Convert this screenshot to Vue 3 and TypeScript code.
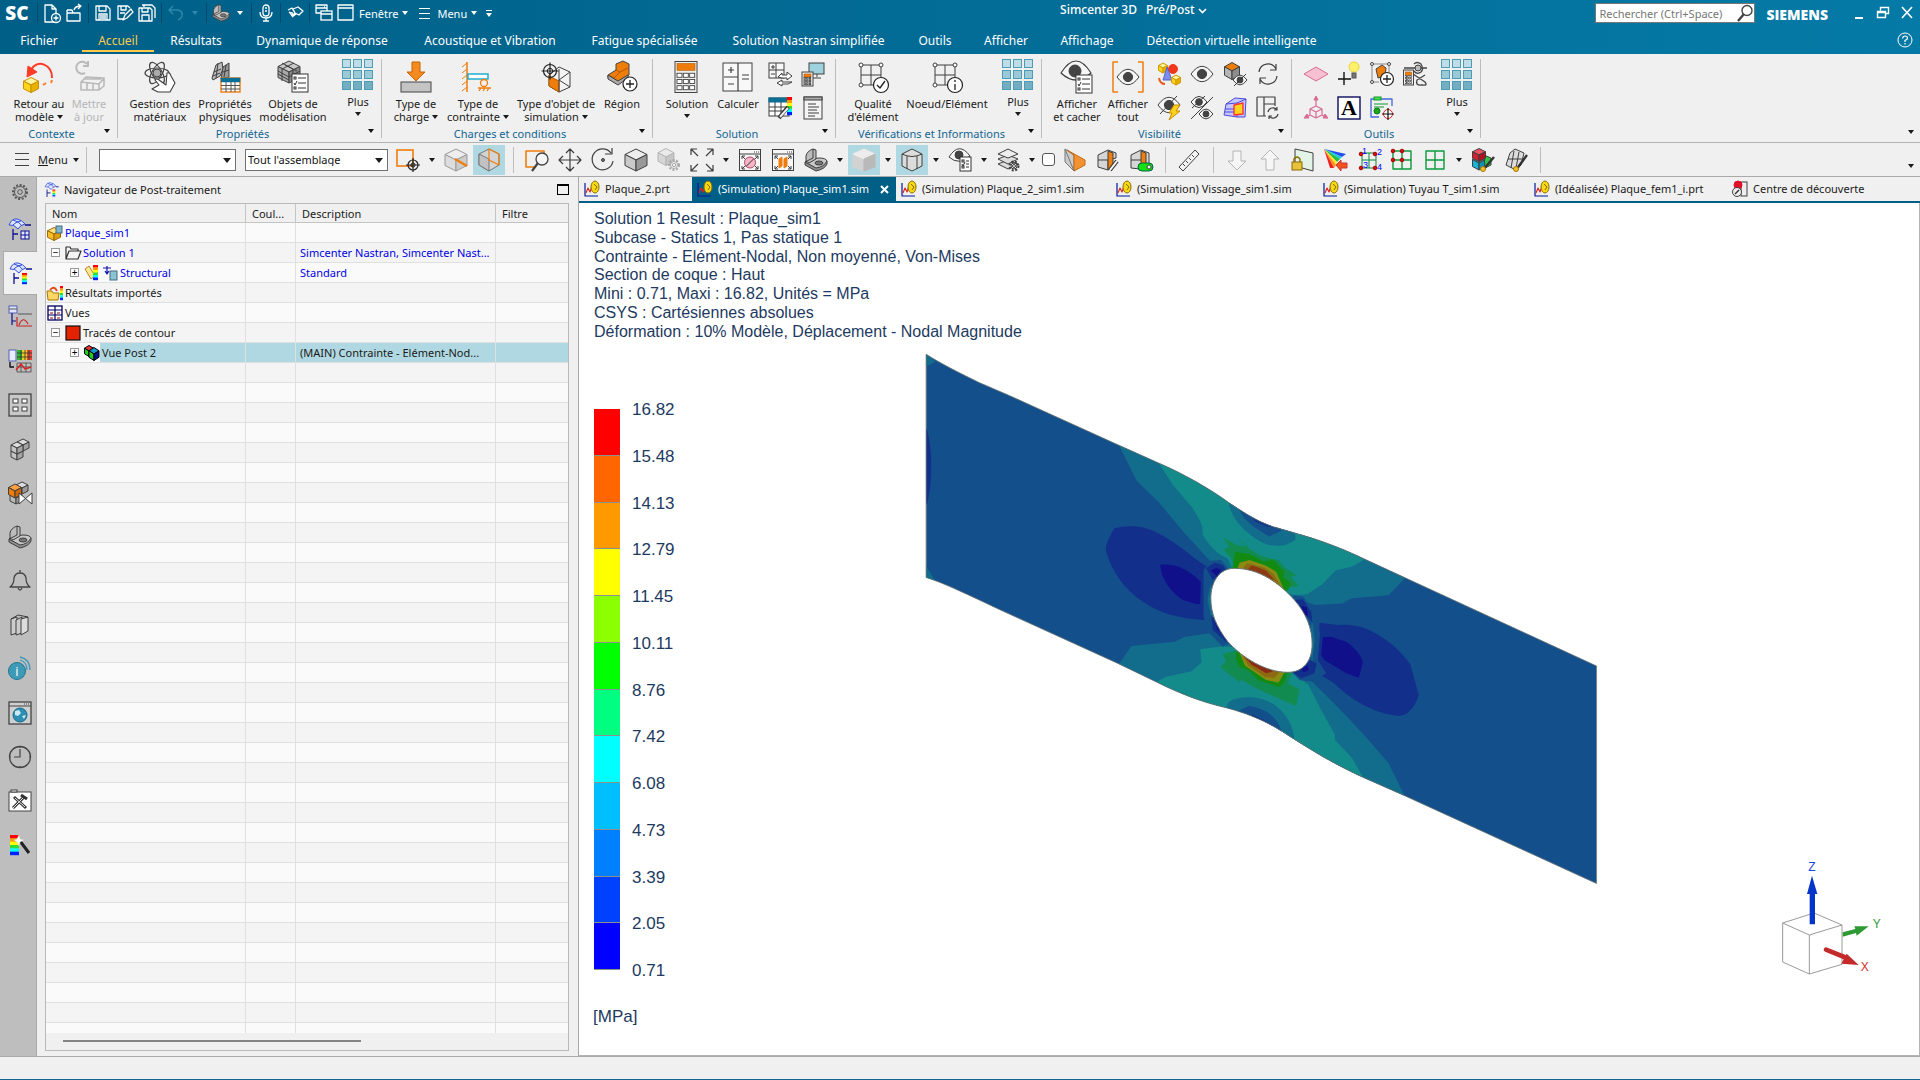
<script setup lang="ts">
import { h } from 'vue'

const D = '#3f3f3f'
const O = '#ef7d0c'
const poly = (pts: string, fill: string, stroke = D, w = 1) =>
  `<polygon points="${pts}" fill="${fill}" stroke="${stroke}" stroke-width="${w}" stroke-linejoin="round"/>`
const line = (d: string, stroke = D, w = 1, fill = 'none') =>
  `<path d="${d}" fill="${fill}" stroke="${stroke}" stroke-width="${w}" stroke-linejoin="round"/>`
const rect = (x: number, y: number, w: number, ht: number, fill: string, stroke = D, sw = 1) =>
  `<rect x="${x}" y="${y}" width="${w}" height="${ht}" fill="${fill}" stroke="${stroke}" stroke-width="${sw}"/>`
const circ = (x: number, y: number, r: number, fill: string, stroke = D, sw = 1) =>
  `<circle cx="${x}" cy="${y}" r="${r}" fill="${fill}" stroke="${stroke}" stroke-width="${sw}"/>`
const cube = (x: number, y: number, w: number, ht: number, t: string, l: string, r: string, s = D) =>
  poly(`${x},${y - ht / 2} ${x + w / 2},${y - ht / 4} ${x},${y} ${x - w / 2},${y - ht / 4}`, t, s) +
  poly(`${x - w / 2},${y - ht / 4} ${x},${y} ${x},${y + ht / 2} ${x - w / 2},${y + ht / 4}`, l, s) +
  poly(`${x + w / 2},${y - ht / 4} ${x},${y} ${x},${y + ht / 2} ${x + w / 2},${y + ht / 4}`, r, s)
const eye = (x: number, y: number, r: number) =>
  line(`M${x - r},${y} Q${x},${y - r * 1.4} ${x + r},${y} Q${x},${y + r * 1.4} ${x - r},${y}Z`, D, 1, '#f6f6f6') +
  circ(x, y, r * 0.42, '#444')
const gear = (x: number, y: number, r: number, c = D, fill = '#f4f4f4') =>
  `<circle cx="${x}" cy="${y}" r="${r}" fill="none" stroke="${c}" stroke-width="2" stroke-dasharray="2 1.6"/>` +
  circ(x, y, r - 1.5, fill, c) + circ(x, y, r / 3, fill, c)
const target = (x: number, y: number, r: number, c = '#222') =>
  circ(x, y, r, 'none', c, 1.2) + circ(x, y, r / 2.4, 'none', c) +
  line(`M${x - r - 2},${y}h${2 * r + 4}M${x},${y - r - 2}v${2 * r + 4}`, c, 1.2)
const badge = (x: number, y: number, r: number, inner: string) => circ(x, y, r, '#fff', '#222', 1.2) + line(inner, '#222', 1.3)
const list = (x: number, y: number, w: number, ht: number) =>
  rect(x, y, w, ht, '#fff', '#333') +
  line(`M${x + 6},${y + 4}h${w - 8}M${x + 6},${y + ht / 2}h${w - 8}M${x + 6},${y + ht - 4}h${w - 8}`, '#333') +
  rect(x + 2, y + 3, 2, 2, '#fff', '#333') + line(`M${x + 2},${y + ht / 2}l1,2l2,-4`, '#333') + rect(x + 2, y + ht - 5, 2, 2, '#fff', '#333')
const calc = (x: number, y: number, w: number, ht: number) => {
  let s = rect(x, y, w, ht, '#ececec', '#444') + rect(x + 2, y + 2, w - 4, ht * 0.22, O, '#b55a00', 0.6)
  for (let i = 0; i < 3; i++) for (let j = 0; j < 3; j++)
    s += rect(x + 2 + (i * (w - 3)) / 3, y + ht * 0.38 + j * ht * 0.2, (w - 7) / 3, ht * 0.13, '#fff', '#444', 0.9)
  return s
}
const rainbow = (x: number, y: number, w: number, ht: number) =>
  ['#f00', '#f90', '#ff0', '#3d3', '#0ff', '#02f'].map((c, i) =>
    `<rect x="${x}" y="${y + (i * ht) / 6}" width="${w}" height="${ht / 6 + 0.2}" fill="${c}"/>`).join('')
const plus9 = [0, 1, 2].map(r => [0, 1, 2].map(c =>
  rect(0.5 + c * 11, 0.5 + r * 11, 8, 8, ['#bfdde6', '#9cc9d6', '#74aec2'][r], '#4c9cb8')).join('')).join('')
const surf = (x: number, y: number, k: string) =>
  line(`M${x},${y + 7}Q${x + 3},${y} ${x + 8},${y + 1}Q${x + 13},${y + 2} ${x + 16},${y + 6}Q${x + 11},${y + 7} ${x + 9},${y + 11}Q${x + 5},${y + 6} ${x},${y + 7}ZM${x + 4},${y + 2}Q${x + 10},${y + 3} ${x + 13},${y + 8}M${x + 12},${y + 3}Q${x + 6},${y + 4} ${x + 4},${y + 7}`, k, 1, '#dfe6ff')
const bracket = line('M1,14V17L12,23Q21,21 23,16V13L12,19Z', D, 1, '#8f8f8f') +
  line('M1,14L7,11L15,10Q22,10 23,13Q20,19 12,20Z', D, 1, '#c9c9c9') +
  line('M2,13V8Q3,3 9,1L12,2V11L5,15Z', D, 1, '#bcbcbc') + line('M9,1V10L1,14') +
  '<ellipse cx="15" cy="15" rx="4" ry="2" fill="#777" stroke="#3f3f3f"/>'
const pin = line('M1,2V15H14', '#001a9a', 1.2) + line('M2,12l2,-5l2,4l2,-6l2,5', '#d22', 1.1) +
  '<ellipse cx="11" cy="6" rx="4" ry="6" fill="#f6d912" stroke="#8a6b00"/><path d="M10,3l3,3l-2,3" stroke="#8a6b00" fill="none"/>'
const win = rect(1.5, 1.5, 21, 21, '#f7f7f7') + line('M1,6H23M16,4h1M18,4h1M20,4h1') +
  line('M4,11V8h3M20,11V8h-3M4,18v3h3M20,18v3h-3M4,8l3,3M20,8l-3,3M4,21l3,-3M20,21l-3,-3', D, 1)
const grid4 = (c: string) => line('M3,3H21V21H3ZM12,3V21M3,12H21', c, 1.4)
const dot = (x: number, y: number) => circ(x, y, 1.8, '#d8120c', '#a00')
const W = '#fff'

const icons: Record<string, string> = {
  plus9,
  retour: cube(8, 24, 15, 15, '#fff3a0', '#ffd51c', '#eab000', '#c99000') + line('M29,17C30,4 14,-3 8,9', '#ff3b26', 2) +
    poly('4,16 5,5 14,11', '#ff3b26', '#ff3b26') + line('M20,24l3,-2M28,22l1,-3', '#ff7a2a', 2),
  maj: line('M12,12A6,6 0 1 1 14,3M15,0v5h-5', '#b9b9b9', 2) + line('M8,21L13,16L31,17L26,23ZM8,21v8h18v-6M31,17v8l-5,4M14,21v8M20,22v7M11,18h17', '#b9b9b9', 1.6),
  gestion: '<g fill="none" stroke="#444" stroke-width="1.2"><ellipse cx="13" cy="12" rx="12" ry="5"/><ellipse cx="13" cy="12" rx="12" ry="5" transform="rotate(60 13 12)"/><ellipse cx="13" cy="12" rx="12" ry="5" transform="rotate(120 13 12)"/></g>' +
    circ(13, 12, 4, '#aaa') + line('M8,28L15,24L11,19Q12,17 15,19L22,24L23,12Q26,11 27,15L31,22L26,31H14Z', D, 1.1, '#fff'),
  props: poly('3,17 7,4 13,1 14,8 11,15 4,19', '#bbb') + poly('12,18 14,6 20,2 20,16', '#999') + line('M5,11L12,8M4,15L11,12M9,2L7,17M14,11L20,9M17,4L15,16') +
    rect(12, 17, 19, 14, '#fff', O, 1.4) + rect(12, 17, 19, 4, '#0a6f96', '#0a6f96', 0.5) + line('M12,24.5H31M12,28H31M17,21V31M22,21V31M26,21V31', '#555'),
  objets: cube(12, 11, 22, 22, '#c9c9c9', '#aaa', '#888') + line('M5,2L16,8V20M17,2L5,8V20M8,4L20,10M1,10L12,16L23,10M1,13L12,19') + list(15, 13, 16, 18),
  charge: poly('12,1 20,1 20,11 25,11 16,20 7,11 12,11', '#f58a1f', '#c76200') + rect(1, 21, 30, 10, '#c4c4c4', '#444'),
  contrainte: line('M5,1V31', O, 1.5) + line('M0,6L5,2M0,12L5,8M0,18L5,14M0,24L5,20M0,30L5,26', O) + rect(6, 13, 20, 5, W, '#12a8cc', 1.4) +
    circ(22, 22, 3.5, 'none', O, 1.3) + line('M16,27H29M17,30l2,-3M21,30l2,-3M25,30l2,-3', O, 1.3),
  typeobj: poly('19,6 30,11 30,26 19,31 9,25 9,14', '#f4f4f4') + poly('9,15 19,20 19,31 9,25', O, '#b65c00') + line('M19,19L30,11M19,19L30,26M19,8V31') + target(10, 10, 6.5),
  region: poly('2,14 10,9 10,3 17,0 23,3 23,14 13,21 2,17', O, '#444') + line('M10,9L14,11L22,7M2,14L8,17L14,11', '#b55a00') + poly('2,14 2,18 12,24 22,17 22,14 12,20', '#aaa') +
    badge(24, 23, 7, 'M24,19v8M20,23h8'),
  solution: calc(4, 0.5, 22, 31),
  calculer: rect(1, 2, 29, 28, '#f8f8f8') + line('M16,2V30M2,16H16M6,9h6M9,6v6M6,23h6M20,14h7M20,18h7', D, 1.2),
  s1: rect(1, 1, 15, 15, '#f8f8f8') + line('M8,1V16M1,8H16M3,5h4M5,3v4M3,12h4') + poly('10,15 14,11 14,13 19,13 19,10 24,14 19,18 19,16 14,16', W) + poly('24,20 14,20 14,18 9,21 14,24 14,22 20,22', W),
  s2: rect(8, 1, 15, 11, '#9ed2de') + line('M16,12v3M12,16h8') + calc(1, 10, 11, 14),
  s3: rect(1, 2, 20, 18, '#fff') + rect(1, 2, 20, 4, '#0a6f96', '#0a6f96') + line('M1,11H21M1,15H21M7,6V20M13,6V20') + rainbow(19, 1, 5, 18) + line('M11,22L20,11', '#333', 4) + line('M12,21L20,12', '#eee', 2),
  s4: rect(3, 1, 18, 22, '#f4f4f4') + rect(3, 1, 18, 3, '#aaa') + line('M7,8h8M7,11h11M7,14h9M7,17h11M7,20h7'),
  qualite: line('M4,4H24V24H4ZM14,4V24M4,14H24') + circ(4, 4, 2, W) + circ(24, 4, 2, W) + circ(4, 24, 2, W) + badge(24, 24, 7.5, 'M20,24l3,3l5,-7'),
  noeud: line('M4,4H24V24H4ZM14,4V24M4,14H24') + circ(4, 4, 2, W) + circ(24, 4, 2, W) + circ(4, 24, 2, W) + badge(24, 24, 7.5, 'M24,19v2M24,23v6'),
  affcacher: line('M0,12Q15,-12 30,12Q15,26 0,12Z', D, 1.2, '#f6f6f6') + circ(14, 10, 6, '#444') + list(15, 14, 16, 18),
  afftout: line('M6,1H1V31H6M26,1H31V31H26', O, 1.5) + eye(16, 16, 11),
  v1: cube(6, 6, 9, 10, '#fff3a0', '#ffd51c', '#eab000', '#d09a00') + circ(16, 7, 4.5, '#f2371c', '#f2371c') + poly('10,5 15,18 6,18', '#7c8cf0', '#5566cc') + cube(19, 18, 9, 10, '#fff3a0', '#ffd51c', '#eab000', '#d09a00') + line('M2,16q1,6 6,6', '#f05a1c', 2),
  v2: eye(12, 12, 11),
  v3: cube(9, 9, 15, 17, O, '#b5b5b5', '#8d8d8d') + eye(17, 18, 7) + line('M11,24L23,12'),
  v4: line('M3,10A9,9 0 0 1 20,7M20,2v6h-6M21,14A9,9 0 0 1 4,17M4,22v-6h6', D, 1.2),
  v5: eye(12, 9, 11) + line('M3,18L20,0') + poly('17,9 23,9 19,15 23,15 12,24 15,17 12,17', '#ffd21c', '#c78c00'),
  v6: eye(9, 6, 8) + eye(16, 18, 7) + line('M1,23L23,1M2,12L15,0'),
  v7: poly('3,8 12,2 23,3 22,21 14,21 1,19', '#c6c6ff', '#4b4bd8') + line('M3,8L14,7L23,3M14,7V21M2,13H14M2,16H14', '#4b4bd8') + poly('11,9 20,7 20,18 11,19', '#ffd21c', '#f33', 1.4),
  v8: line('M1,1H19V10M1,1V20H10M8,1V20M8,8H19', D, 1.2) + line('M12,16A5,5 0 0 1 21,14M22,18A5,5 0 0 1 13,20M21,11v3h-3M13,23v-3h3', D, 1.2),
  o1: poly('12,5 24,12 12,19 0,12', '#f7c0d2', '#d86a93'),
  o2: line('M7,10V23M1,17H14', '#111', 1.4) + circ(17, 5, 5, '#fdf06a', '#e8d530') + rect(15, 11, 4, 5, '#777', '#555'),
  o3: line('M2,2H19M2,2V20M19,2V10M2,20H9', '#888') + circ(2, 2, 1.5, W) + circ(19, 2, 1.5, W) + circ(2, 20, 1.5, W) + poly('6,7 12,3 16,6 15,14 8,16', O, '#444') + badge(17, 17, 6.5, 'M17,13v8M13,17h8'),
  o4: line('M1,6H24M11,2Q14,-1 18,2Q21,7 18,10Q14,13 11,9', '#444', 1.3) + line('M10,12L22,20Q25,24 19,23Q12,24 14,18L22,13', '#444', 1.3) + circ(15, 6, 3, '#bbb') + calc(0.5, 8, 10, 15),
  o5: line('M12,10L18,13V19L12,22L6,19V13ZM12,16V22M12,16L6,13M12,16L18,13M12,10V1M18,19l5,3M6,19l-5,3', '#d86a93', 1.2) + poly('12,0 14,4 10,4', '#d86a93', '#d86a93') + poly('0,22 5,22 3,18', '#d86a93', '#d86a93') + poly('24,22 19,22 21,18', '#d86a93', '#d86a93'),
  o6: rect(1, 1, 22, 22, W, '#0c0c5c', 1.4) + '<text x="12" y="19" text-anchor="middle" font-family="Liberation Serif, serif" font-weight="700" font-size="22">A</text>',
  o7: line('M9,21H1V3H22V10', '#4468d8', 1.3) + rect(4, 1, 7, 3, '#4ddc4d', '#0a9a2a') + line('M4,8h14M4,11h10', '#0a9a2a') + circ(7, 15, 3, '#1aa81a', '#0a7a1a') + circ(18, 18, 4.5, W, '#d22') + line('M18,12V24M12,18H24', '#111', 1.2),
  selbox: rect(1, 2, 16, 16, 'none', O, 1.6) + target(17, 17, 5),
  cubeedge: cube(12, 12, 22, 22, '#eee', '#ddd', '#ccc', '#999') + line('M11,11L23,18', O, 2.4),
  cubewire: poly('12,1 22,6 22,17 12,23 2,17 2,6', '#d4d4d4', '#777') + poly('2,6 12,11 12,23 2,17', '#c2c2c2', '#777') + line('M12,1L22,6V17L12,12Z', O, 1.2),
  zoomwin: line('M9,19H1V3H19V6', O, 1.6) + circ(17, 11, 6, '#f6f6f6', '#444', 1.3) + line('M13,15L7,23', '#444', 2.2),
  pan: line('M12,1V23M1,12H23M8,5l4,-4l4,4M8,19l4,4l4,-4M5,8l-4,4l4,4M19,8l4,4l-4,4', D, 1.2),
  rotate: line('M20,5A10.500,10.500 0 1 0 22,13M21,0V6H14', D, 1.2) + circ(12, 12, 1.5, '#777'),
  cubegray: cube(12, 12, 22, 22, '#eee', '#c9c9c9', '#999'),
  cubegear: cube(9, 9, 16, 17, '#eaeaea', '#d6d6d6', '#c6c6c6', '#b5b5b5') + gear(17, 17, 5, '#a8a8a8'),
  fit: line('M1,7V1H7M1,1L8,8M23,7V1H17M23,1L16,8M1,17V23H7M1,23L8,16M23,17V23H17M23,23L16,16', D, 1.2),
  win1: win + circ(12, 14.5, 5.5, '#f4b5c8', '#b04a6a') + line('M8,18.500L16,10.500', '#333'),
  win2: win + poly('8,11 11,9 11,18 8,20', O, O) + poly('13,11 16,9 16,18 13,20', O, O),
  bracket,
  shaded: poly('1,6 12,1 23,6 23,19 12,23 1,19', '#d2d2d2', '#d2d2d2') + poly('1,6 12,1 23,6 12,11', '#ececec', '#ececec') + poly('12,11 23,6 23,19 12,23', '#b9b9b9', '#b9b9b9'),
  shadededge: poly('2,6 12,1 22,6 22,18 12,23 2,18', '#dcdcdc') + line('M2,6Q12,11 22,6M7,8V21M17,8V21'),
  eyelist: line('M1,9Q11,-7 22,8Q11,18 1,9Z', D, 1, '#f6f6f6') + circ(11, 7, 4, '#444') + list(12, 9, 11, 14),
  layers: poly('12,12 22,16 12,21 2,16', '#ddd') + poly('12,7 22,11 12,16 2,11', '#ddd') + poly('12,1 22,6 12,10 2,6', '#eee') + gear(18, 18, 4.5),
  clip1: poly('2,1 11,7 11,23 2,14', '#ccc', '#777') + poly('4,2 22,12 22,17 11,23 11,7', '#f39233', '#c46a10') + line('M2,1L11,23', '#777'),
  clip2: poly('2,7 12,2 20,5 20,10 12,12 12,22 2,19', '#d6d6d6') + poly('12,3 17,5 17,20 12,22', O) + line('M2,12H12') + line('M14,22L21,13', '#333', 4) + line('M14,22L21,13', W, 2),
  clip3: poly('2,7 12,2 20,5 20,22 2,20', '#d6d6d6') + poly('12,3 17,5 17,20 12,22', O) + line('M2,12H12') + '<rect x="9" y="15" width="15" height="8" rx="4" fill="#12e012" stroke="#064"/>' + circ(20, 19, 2, W),
  ruler: poly('2,19 18,2 22,6 6,23', '#f4f4f4') + line('M6,16l2,2M9,13l2,2M12,10l2,2M15,7l2,2'),
  down: poly('8,3 16,3 16,13 21,13 12,22 3,13 8,13', '#f6f6f6', '#b4b4b4'),
  up: poly('8,22 16,22 16,11 21,11 12,2 3,11 8,11', '#f6f6f6', '#b4b4b4'),
  lock: poly('4,1 22,5 22,23 4,18', '#e3f3e6') + rect(1, 14, 10, 8, '#e8c23a', '#8a6a00') + line('M3,14v-3q3,-4 6,0v3', '#8a6a00', 1.4),
  contour: '<path d="M0,1L22,6L18,9Z" fill="#2050f0"/><path d="M0,1L18,9L16,11Z" fill="#20c8e8"/><path d="M0,1L16,11L13,14Z" fill="#20c040"/><path d="M0,1L13,14L12,17Z" fill="#ffe820"/><path d="M0,1L12,17L10,20Z" fill="#ff9020"/><path d="M0,1L10,20L6,20Z" fill="#f02020"/>' + poly('12,17 17,12 17,15 23,15 23,20 17,20 17,23', '#f2531c', '#c33'),
  nums: line('M5,5H19V20H5ZM12,5V20M5,12H19', '#0a8a3a') + dot(4, 6) + dot(18, 6) + dot(4, 20) + dot(18, 20) +
    '<g font-family="Liberation Sans, sans-serif" font-size="9" fill="#00f"><text x="5" y="6">1</text><text x="20" y="7">2</text><text x="6" y="20">3</text><text x="20" y="22">4</text></g>',
  griddots: grid4('#0a9a3c') + dot(3, 3) + dot(12, 3) + dot(3, 12) + dot(12, 12),
  grid: grid4('#0a9a3c'),
  cubes: cube(8, 15, 13, 14, '#5ce', '#19b5d8', '#0a90b0') + poly('13,7 20,10 20,17 14,20', '#2bc44a') + cube(8, 7, 13, 13, '#f05060', '#d02030', '#b01020') + line('M12,22L23,9', '#333', 2.4) + circ(12, 21, 2.5, '#f0c030', '#a70'),
  mesh: poly('6,5 11,1 20,5 17,17 12,22 2,17', '#ddd') + line('M4,11L18,11M10,3L7,20M15,4L12,20') + line('M12,22L23,7', '#333', 2.4) + circ(12, 21, 2.5, '#f0c030', '#a70'),
  gear: gear(12, 12, 7, '#555', '#bebebe'),
  r1: surf(1, 1, '#3450d8') + line('M5,12V23M5,17H10M17,8H23', '#101090', 1.3) + rect(13, 14, 8, 8, '#dfe6ff', '#101090') + line('M17,14V22M13,18H21', '#101090'),
  r2: surf(1, 1, '#3450d8') + line('M5,12V23M5,17H10M17,8H23', '#101090', 1.3) + rainbow(13, 12, 5, 11),
  r3: rect(1, 1, 8, 7, '#dfe6ff', '#5560b0') + line('M1,4H9M10,9H24', '#555') + line('M4,8V20M4,16H8', '#101090', 1.2) + line('M9,12V21H24M11,20Q15,10 20,19', '#c22', 1.2),
  r4: rect(1, 1, 7, 11, '#e8ecff', '#5560b0') + '<path d="M9,1H24V11H9Z" fill="#e8d020"/><path d="M9,1h5v10h-5z" fill="#2db52d"/><path d="M19,1h5v10h-5z" fill="#e43"/>' + line('M9,4H24M9,8H24M13,1V11M17,1V11M21,1V11', '#333', 0.8) + line('M9,14H23V23H9ZM13,14V23M18,14V23M9,18H23', '#444', 0.8) + line('M8,21l5,-6l4,5l6,-2', '#d22', 1.4) + line('M2,13v5h4', '#111', 1.4),
  r5: rect(1, 1, 22, 22, '#c8c8c8', '#444', 1.3) + rect(5, 6, 5, 4, W) + rect(14, 6, 5, 4, W) + rect(5, 14, 5, 4, W) + rect(14, 14, 5, 4, W),
  r6: cube(9, 17, 12, 12, '#ddd', '#c4c4c4', '#a4a4a4') + cube(15, 8, 12, 12, '#ddd', '#c4c4c4', '#a4a4a4') + cube(9, 11, 12, 12, '#ddd', '#c4c4c4', '#a4a4a4'),
  r7: cube(8, 17, 12, 12, '#ddd', '#bbb', '#999') + cube(14, 7, 12, 12, '#ddd', '#bbb', '#999') + cube(7, 10, 13, 14, '#ffa040', O, '#d06400') + poly('11,12 24,23 24,12 11,23', W),
  bell: line('M2,18Q6,15 6,9Q7,4 12,4Q17,4 18,9Q18,15 22,18ZM10,19q2,4 4,0M12,4V1', '#444', 1.3),
  books: poly('3,6 9,4 9,20 3,22', '#ccc') + poly('8,7 14,4 14,20 8,22', '#ccc') + poly('13,6 20,4 20,18 13,22', '#ddd') + line('M3,6L10,2L20,4'),
  info: '<ellipse cx="9" cy="14" rx="8.500" ry="8.500" fill="#3f9ab8" stroke="#1f7896"/><text x="9" y="19" text-anchor="middle" font-family="Open Sans, sans-serif" font-size="13" fill="#fff">i</text>' + line('M12,3Q19,5 19,13M12,0Q22,2 22,13', '#3f9ab8', 1.3),
  web: rect(1, 1, 22, 22, '#d0d0d0', '#444', 1.3) + line('M1,5H23M16,3h1M18,3h1M20,3h1', '#444') + circ(12, 14, 7, '#2d8fb4', '#1a6a8a') + '<path d="M7,10l4,-1l2,3l-3,3l-3,-1zM14,15l4,-1l-2,4z" fill="#cfe8f0"/>',
  clock: circ(12, 12, 10.5, 'none', '#444', 1.3) + line('M12,4V12H6M12,1v2M12,21v2M1,12h2M21,12h2', '#444', 1.2),
  tools: rect(1, 3, 22, 19, W, '#444') + rect(3, 1, 6, 2, W) + line('M5,19L16,8', '#333', 3) + line('M6,8L18,19', '#333', 3) + line('M13,6l6,4', '#333', 3) + line('M5,19L15,9M7,9L17,18', '#eee', 1),
  wand: rainbow(2, 2, 9, 20) + line('M12,8L21,20', '#222', 3) + poly('11,2 12,6 16,7 12,9 11,13 9,9 6,7 9,6', W, '#ccc', 0.5),
  tnew: line('M11,18H2V1H9L13,5V9M9,1V5H13', W, 1.3) + circ(13, 14, 4.5, 'none', W, 1.3) + line('M13,11.500v5M10.500,14h5', W, 1.3),
  topen: line('M2,6V17H15V9H2M2,6H7L8,9M9,6Q10,2 16,2M13,0l3,2l-3,3', W, 1.3),
  tsave: line('M2,2H13L16,5V16H2ZM5,2V7H12V2M5,16V10H13V16M6,12h6M6,14h6', W, 1.3),
  tsaveas: line('M12,2H2V15H7M5,2V6H10V2M12,2l2,2M7,16l2,-5L15,5l2,3L11,14ZM4,9H9', W, 1.3),
  tsaveall: line('M4,1H14L17,4V14M1,4H12L14,6V17H1ZM4,4V8H10V4M4,17V11H11V17M6,1V3', W, 1.3),
  tundo: line('M6,2L2,6L6,10M2,6H11Q16,7 15,12Q14,15 11,16', '#2f86ab', 1.5),
  tmic: '<rect x="6" y="1" width="6" height="11" rx="3" fill="none" stroke="#fff" stroke-width="1.3"/>' + line('M3,8Q3,14 9,14Q15,14 15,8M9,14V17M6,17H12M8,4h2M8,7h2', W, 1.3),
  ttag: line('M2,6L6,4L9,9L6,13M9,9L7,5L12,3L17,7L13,11ZM6,13L10,10', W, 1.3) + poly('3,8 7,9 6,12', '#cfe2ea', W),
  twins: line('M1,1H12V9H1ZM1,4H12', W, 1.3) + rect(6, 7, 11, 9, '#005f87', W, 1.3) + line('M6,10H17M9,3h1', W, 1.3),
  twin: line('M1,1H16V16H1ZM1,4H16', W, 1.3),
  nav: surf(0, 0, '#3450d8') + line('M3,11V22M3,16H8M16,7H20', '#101090', 1.3) + rainbow(11, 11, 4, 10),
  folderY: cube(7, 9, 13, 13, '#ffe07a', '#f8c02c', '#dd9f10', '#9a6a00') + rect(9, 1, 6, 7, '#7ab8c8', '#468'),
  folder: line('M1,14V2H5L6,4H13V6M1,14L4,6H16L13,14Z', '#333', 1.2),
  ruleR: poly('1,4 5,1 11,11 7,14', '#ffe890', '#a60', 0.8) + rainbow(9, 0, 5, 15),
  calcB: line('M1,3h8M5,1v8M3,6l2,3l2,-3', '#1212b0', 1.2) + rect(8, 6, 7, 9, '#8cc3d0', '#468'),
  import: poly('0,6 5,6 6,8 12,8 11,15 1,15', '#ffd765', '#a57800') + line('M3,5Q7,0 10,6', '#e6461c', 1.8) + rainbow(13, 1, 3, 14),
  views: rect(1, 1, 14, 14, W, '#000060', 1.3) + line('M1,5H15M8,1V15M1,10H15', '#000060', 1.2) + line('M3,8h3M10,8h3M3,13h3M10,13h3', '#900', 1.2),
  red: rect(1, 1, 14, 14, '#e32200', '#111', 1.2),
  post: cube(5, 6, 9, 11, '#e33', '#2c2', '#ee2', '#000') + cube(10, 9, 10, 13, '#19c', '#2c2', '#00118a', '#000'),
  center: rect(9, 1, 6, 14, '#eee') + circ(6, 4, 4, '#e3102c', '#e3102c') + circ(5, 11, 4.5, '#eee') + line('M3,13l4,-4', '#333', 1.4),
  pin,
}

const Ico = (p: any) => {
  const b = p.box ?? 24
  return h('svg', { width: p.size ?? b, height: p.size ?? b, viewBox: `0 0 ${b} ${b}`, 'aria-hidden': 'true', innerHTML: icons[p.n], style: { display: 'block', flex: 'none', overflow: 'visible' } })
}

const menuTabs = [
  { t: 'Fichier', w: 78 }, { t: 'Accueil', w: 72, on: true }, { t: 'Résultats', w: 84 }, { t: 'Dynamique de réponse', w: 168 },
  { t: 'Acoustique et Vibration', w: 168 }, { t: 'Fatigue spécialisée', w: 141 }, { t: 'Solution Nastran simplifiée', w: 187 },
  { t: 'Outils', w: 66 }, { t: 'Afficher', w: 76 }, { t: 'Affichage', w: 86 }, { t: 'Détection virtuelle intelligente', w: 203 },
]

interface Big { i: string; a: string; b?: string; w: number; c?: boolean; off?: boolean }
interface Group { name: string; w: number; pad: number; big: Big[]; small?: string[]; cols?: number; plus?: boolean }
const groups: Group[] = [
  { name: 'Contexte', w: 118, pad: 13, big: [{ i: 'retour', a: 'Retour au', b: 'modèle', w: 52, c: true }, { i: 'maj', a: 'Mettre', b: 'à jour', w: 48, off: true }] },
  { name: 'Propriétés', w: 264, pad: 10, plus: true, big: [{ i: 'gestion', a: 'Gestion des', b: 'matériaux', w: 64 }, { i: 'props', a: 'Propriétés', b: 'physiques', w: 66 }, { i: 'objets', a: 'Objets de', b: 'modélisation', w: 70 }] },
  { name: 'Charges et conditions', w: 271, pad: 8, big: [{ i: 'charge', a: 'Type de', b: 'charge', w: 52, c: true }, { i: 'contrainte', a: 'Type de', b: 'contrainte', w: 72, c: true }, { i: 'typeobj', a: "Type d'objet de", b: 'simulation', w: 84, c: true }, { i: 'region', a: 'Région', w: 48 }] },
  { name: 'Solution', w: 183, pad: 8, big: [{ i: 'solution', a: 'Solution', w: 52, c: true }, { i: 'calculer', a: 'Calculer', w: 50 }], small: ['s1', 's2', 's3', 's4'], cols: 2 },
  { name: 'Vérifications et Informations', w: 206, pad: 4, plus: true, big: [{ i: 'qualite', a: 'Qualité', b: "d'élément", w: 66 }, { i: 'noeud', a: 'Noeud/Elément', w: 82 }] },
  { name: 'Visibilité', w: 250, pad: 8, big: [{ i: 'affcacher', a: 'Afficher', b: 'et cacher', w: 54 }, { i: 'afftout', a: 'Afficher', b: 'tout', w: 48 }], small: ['v1', 'v2', 'v3', 'v4', 'v5', 'v6', 'v7', 'v8'], cols: 4 },
  { name: 'Outils', w: 189, pad: 7, big: [], small: ['o1', 'o2', 'o3', 'o4', 'o5', 'o6', 'o7'], cols: 4, plus: true },
]

// '>' is a drop-down caret, '|' a separator, '#' a tick box, '*' marks a pressed button
const tools = ['selbox', '>', 'cubeedge', '*cubewire', '|', 'zoomwin', 'pan', 'rotate', 'cubegray', 'cubegear', 'fit', '>', 'win1', 'win2', 'bracket', '>',
  '*shaded', '>', '*shadededge', '>', 'eyelist', '>', 'layers', '>', '#', 'clip1', 'clip2', 'clip3', '|', 'ruler', '|', 'down', 'up', 'lock', 'contour',
  'nums', 'griddots', 'grid', '>', 'cubes', 'mesh', '|']
const quick = ['|', 'tnew', 'topen', '|', 'tsave', 'tsaveas', 'tsaveall', '|', 'tundo', '<', '|', 'bracket', '>', '|', 'tmic', '|', 'ttag', '|', 'twins', 'twin']
const rail = ['r1', 'r2', 'r3', 'r4', 'r5', 'r6', 'r7', 'bracket', 'bell', 'books', 'info', 'web', 'clock', 'tools', 'wand']

const docs = [
  { t: 'Plaque_2.prt', w: 113 }, { t: '(Simulation) Plaque_sim1.sim', w: 204, on: true }, { t: '(Simulation) Plaque_2_sim1.sim', w: 215 },
  { t: '(Simulation) Vissage_sim1.sim', w: 207 }, { t: '(Simulation) Tuyau T_sim1.sim', w: 211 }, { t: '(Idéalisée) Plaque_fem1_i.prt', w: 198 },
  { t: 'Centre de découverte', w: 190, i: 'center' },
]

interface Row { n?: string; d?: string; ic?: string[]; lv?: number; ex?: string; blue?: boolean; sel?: boolean }
const rows: Row[] = [
  { n: 'Plaque_sim1', ic: ['folderY'], lv: 0, blue: true },
  { n: 'Solution 1', ic: ['folder'], lv: 1, ex: '-', blue: true, d: 'Simcenter Nastran, Simcenter Nast...' },
  { n: 'Structural', ic: ['ruleR', 'calcB'], lv: 2, ex: '+', blue: true, d: 'Standard' },
  { n: 'Résultats importés', ic: ['import'], lv: 0 },
  { n: 'Vues', ic: ['views'], lv: 0 },
  { n: 'Tracés de contour', ic: ['red'], lv: 1, ex: '-' },
  { n: 'Vue Post 2', ic: ['post'], lv: 2, ex: '+', sel: true, d: '(MAIN) Contrainte - Elément-Nod...' },
  ...Array.from({ length: 34 }, () => ({})),
]

const info = ['Solution 1 Result : Plaque_sim1', 'Subcase - Statics 1, Pas statique 1', 'Contrainte - Elément-Nodal, Non moyenné, Von-Mises',
  'Section de coque : Haut', 'Mini : 0.71, Maxi : 16.82, Unités = MPa', 'CSYS : Cartésiennes absolues', 'Déformation : 10% Modèle, Déplacement - Nodal Magnitude']
const bands = ['#ff0000', '#ff6600', '#ff9900', '#ffff00', '#8cff00', '#00ff00', '#00ff80', '#00ffff', '#00bfff', '#0080ff', '#0040ff', '#0000ff']
const values = ['16.82', '15.48', '14.13', '12.79', '11.45', '10.11', '8.76', '7.42', '6.08', '4.73', '3.39', '2.05', '0.71']
const plate = 'M58,40C90,66 130,92 173,119L240,156L300,191L478,295L565,345C620,375 680,420 720,458C760,492 790,515 822,526C880,548 930,563 1010,612L1518,913V1522L1100,1276L1010,1225C950,1190 905,1155 850,1110C810,1075 770,1050 712,1030C660,1015 610,990 560,958L478,907L230,762C150,714 100,682 58,665Z'
</script>

<template>
  <div class="app">
    <header class="head">
      <div class="titlebar">
        <span class="logo">SC</span>
        <template v-for="(q, k) in quick" :key="k">
          <i v-if="q === '|'" class="tsep"></i>
          <button v-else-if="q === '>' || q === '<'" class="tcaret" :class="{ dim: q === '<' }" aria-label="Options"><i class="caret"></i></button>
          <button v-else class="ticon" :aria-label="q"><Ico :n="q" :box="q === 'bracket' ? 24 : 18" :size="18" /></button>
        </template>
        <button class="tmenu">Fenêtre<i class="caret"></i></button>
        <button class="tmenu"><i class="burger"></i>Menu<i class="caret"></i></button>
        <button class="tmore" aria-label="Personnaliser"><i class="caret"></i></button>
        <span class="sp1"></span>
        <span class="apptitle">Simcenter 3D</span>
        <button class="appmode">Pré/Post
          <svg width="9" height="6" viewBox="0 0 9 6"><path d="M1,1l3.500,3.500l3.500,-3.500" fill="none" stroke="#fff" stroke-width="1.6" /></svg>
        </button>
        <span class="sp2"></span>
        <label class="search">
          <input type="text" placeholder="Rechercher (Ctrl+Space)" aria-label="Rechercher" />
          <svg width="18" height="18" viewBox="0 0 18 18"><circle cx="11" cy="6.500" r="5" fill="none" stroke="#444" stroke-width="1.4" /><path d="M8,10L2,17" stroke="#444" stroke-width="2.400" /></svg>
        </label>
        <span class="brand">SIEMENS</span>
        <button class="wbtn" aria-label="Réduire"><svg width="14" height="14"><path d="M3,12H11" stroke="#fff" stroke-width="2" /></svg></button>
        <button class="wbtn" aria-label="Restaurer"><svg width="14" height="14"><path d="M4.500,4.500V1.500H12.500V7.500H9.500M1.500,5.500H9.500V11.500H1.500ZM1.500,6.500H9.500" fill="none" stroke="#fff" stroke-width="1.4" /></svg></button>
        <button class="wbtn" aria-label="Fermer"><svg width="14" height="14"><path d="M2,1L12,12M12,1L2,12" stroke="#fff" stroke-width="1.600" /></svg></button>
      </div>
      <nav class="menutabs">
        <a v-for="m in menuTabs" :key="m.t" href="#" :class="{ on: m.on }" :style="{ width: m.w + 'px' }">{{ m.t }}</a>
        <button class="help" aria-label="Aide"><svg width="16" height="16" viewBox="0 0 16 16"><circle cx="8" cy="8" r="7" fill="none" stroke="#fff" /><path d="M5.500,6.500Q6,4 8,4Q10.500,4 10.500,6Q10.500,7.500 8,8.500V10M8,11v1.500" fill="none" stroke="#fff" stroke-width="1.200" /></svg></button>
      </nav>
    </header>

    <section class="ribbon">
      <div v-for="g in groups" :key="g.name" class="group" :style="{ width: g.w + 'px' }">
        <div class="gbody" :style="{ paddingLeft: g.pad + 'px' }">
          <button v-for="b in g.big" :key="b.i" class="big" :class="{ off: b.off }" :style="{ width: b.w + 'px' }">
            <Ico :n="b.i" :box="32" />
            <span>{{ b.a }}</span>
            <span v-if="b.b">{{ b.b }}<i v-if="b.c" class="caret in"></i></span>
            <i v-else-if="b.c" class="caret under"></i>
          </button>
          <div v-if="g.small" class="small" :class="'c' + g.cols">
            <button v-for="s in g.small" :key="s" :aria-label="s"><Ico :n="s" /></button>
          </div>
          <button v-if="g.plus" class="big plus">
            <Ico n="plus9" :box="32" />
            <span>Plus</span><i class="caret under"></i>
          </button>
        </div>
        <div class="gname">{{ g.name }}<i class="caret"></i></div>
      </div>
      <i class="caret edge"></i>
    </section>

    <section class="toolbar">
      <button class="tbmenu"><i class="burger"></i><span><u>M</u>enu</span><i class="caret"></i></button>
      <i class="bar"></i>
      <span class="combo first"><select aria-label="Filtre de type"><option></option></select><i class="caret"></i></span>
      <span class="combo"><select aria-label="Portée de sélection"><option>Tout l'assemblage</option></select><i class="caret"></i></span>
      <div class="tools">
        <template v-for="(t, k) in tools" :key="k">
          <i v-if="t === '|'" class="cell"><i class="bar"></i></i>
          <button v-else-if="t === '>'" class="cell" aria-label="Options"><i class="caret"></i></button>
          <input v-else-if="t === '#'" type="checkbox" aria-label="Coupe" />
          <button v-else class="tool" :class="{ pressed: t[0] === '*' }" :aria-label="t"><Ico :n="t.replace('*', '')" /></button>
        </template>
      </div>
      <i class="caret edge"></i>
    </section>

    <main class="main">
      <nav class="rail">
        <button class="first" aria-label="Options"><Ico n="gear" /></button>
        <button v-for="r in rail" :key="r" :class="{ on: r === 'r2' }" :aria-label="r"><Ico :n="r" /></button>
      </nav>

      <aside class="panel">
        <div class="ptitle"><Ico n="nav" :box="22" :size="15" /><span>Navigateur de Post-traitement</span><button class="max" aria-label="Agrandir"></button></div>
        <div class="tree">
          <div class="rows">
            <table>
              <colgroup><col class="k1" /><col class="k2" /><col class="k1" /><col /></colgroup>
              <thead><tr><th>Nom</th><th>Coul...</th><th>Description</th><th>Filtre</th></tr></thead>
              <tbody>
                <tr v-for="(r, k) in rows" :key="k" :class="{ blue: r.blue, sel: r.sel }">
                  <td>
                    <div v-if="r.n" class="node" :class="'lv' + r.lv">
                      <i v-if="r.ex" class="ex">{{ r.ex === '-' ? '−' : '+' }}</i>
                      <Ico v-for="c in r.ic" :key="c" :n="c" :box="16" />
                      <span>{{ r.n }}</span>
                    </div>
                  </td>
                  <td></td>
                  <td>{{ r.d }}</td>
                  <td></td>
                </tr>
              </tbody>
            </table>
          </div>
          <div class="scroll"><i></i></div>
        </div>
      </aside>

      <section class="work">
        <nav class="docs">
          <a v-for="d in docs" :key="d.t" href="#" :class="{ on: d.on }" :style="{ width: d.w + 'px' }">
            <Ico :n="d.i || 'pin'" :box="16" /><span>{{ d.t }}</span>
            <svg v-if="d.on" class="x" width="9" height="9" viewBox="0 0 9 9"><path d="M1,1L8,8M8,1L1,8" stroke="#fff" stroke-width="2" /></svg>
          </a>
        </nav>
        <div class="view">
          <svg class="model" viewBox="580 203 1339 852">
            <defs><clipPath id="plate"><path :d="plate" /></clipPath></defs>
            <g transform="translate(900 340) scale(.4592 .3571)">
              <g clip-path="url(#plate)">
                <path fill="#134f8b" d="M0,0H1568V1568H0Z" />
                <path fill="#126d8c" d="M40,20L78,60L58,74H40ZM40,600L60,638L78,675L40,680Z" />
                <path fill="#122f8b" d="M50,250H60C72,310 72,400 60,460H50Z" />
                <path fill="#126d8c" d="M478,295L517,395L565,455L620,540L670,610L700,650L905,742L965,738L985,723L1065,715L1100,668V300L478,200Z" />
                <path fill="#126d8c" d="M478,907L505,857L600,845L620,832L672,822L790,785L890,945L935,1003C980,1060 1030,1130 1065,1185L1100,1276V1500L400,1100Z" />
                <path fill="#138b8b" d="M565,345L595,405L628,455L637,468C655,505 662,520 660,545C675,575 690,600 715,612L730,660L860,715L888,712L920,685L950,645L985,635L1010,617V300H565Z" />
                <path fill="#138b8b" d="M560,958L580,943L635,928L658,903L655,866L700,858L740,860L850,930L890,965L920,1040L948,1105L948,1120L985,1170L1010,1225V1400L500,1100Z" />
                <path fill="#126d8c" d="M717,455C722,500 750,535 780,560C800,577 825,580 845,572L862,560V540L750,440Z" />
                <path fill="#134f8b" d="M740,475C750,505 770,525 805,550L832,534L830,500Z" />
                <path fill="#122f8b" d="M765,488L822,526L800,522L775,508Z" />
                <path fill="#126d8c" d="M710,1032L718,1012C745,995 790,995 820,1025C845,1050 858,1085 860,1120L780,1090Z" />
                <path fill="#134f8b" d="M733,1042L760,1025C800,1030 825,1062 832,1098Z" />
                <path fill="#122f8b" d="M765,1048L790,1062L815,1080L790,1085Z" />
              </g>
              <path fill="none" stroke="#66706f" stroke-width="2" :d="plate" />
            </g>
            <g transform="translate(1080 500) scale(.3333)">
              <path fill="#122f8b" d="M105,85C140,75 190,75 230,97C290,125 340,175 385,202L375,250L378,300L374,360C300,355 240,340 190,305C130,265 95,210 79,150C79,130 90,110 105,85Z" />
              <path fill="#122f8b" d="M720,368L775,375C830,370 870,385 920,420C950,440 975,470 992,492L1018,585C1005,625 985,645 960,648C900,645 830,610 780,565C760,545 745,535 705,520L718,430Z" />
              <path fill="#10108b" d="M242,194C280,190 310,200 345,228L364,245L362,312H350L310,300C275,275 245,240 242,194ZM730,412L755,410L800,425C835,450 850,475 850,490L838,533L800,520L735,480L725,465Z" />
              <path fill="#134f8b" d="M372,210L395,182L425,180L445,205L400,260L398,340L450,430L430,440L390,400L372,350ZM640,285L672,290L705,340L722,400L715,480L740,520L700,545L660,540L640,517L690,450Z" />
              <path fill="#126d8c" d="M394,250L384,300L394,350L420,400L400,330ZM698,350L706,420L698,490L690,430Z" />
              <path fill="#122f8b" d="M380,205L405,188L430,195L440,210L400,240ZM395,345L400,390L440,425L450,420ZM645,300L670,298L695,335L700,370ZM640,517L665,535L705,520L712,490L690,480Z" />
              <path fill="#10108b" d="M394,212L410,203L425,210L412,228ZM405,365L415,390L430,400ZM665,318L682,322L686,350L670,340ZM665,508L685,495L688,510L672,517Z" />
              <path fill="#128b50" d="M470,210L455,175L432,148L450,142L430,112L470,135L507,140L475,115L510,147L545,168L600,182L612,200L650,225L635,232L658,258L630,262L620,275Z" />
              <path fill="#138b13" d="M459,205L468,155L510,163L555,185L580,178L615,215L612,232L635,250L622,275Z" />
              <path fill="#8b8b13" d="M474,205L480,188L510,180L560,197L590,215L605,250L612,266Z" />
              <path fill="#8b6a13" d="M488,207L503,190L555,203L582,222L602,255Z" />
              <path fill="#8b3a13" d="M505,207L518,196L560,212L585,240Z" />
              <path fill="#128b50" d="M468,452L430,462L440,485L423,500L435,512L480,545L487,540L530,565L590,592L650,618L660,568L625,550L640,515Z" />
              <path fill="#138b13" d="M470,450V480L480,500L510,512L535,540L600,562L613,548L625,515Z" />
              <path fill="#8b8b13" d="M480,458L497,497L560,540L597,548L614,518Z" />
              <path fill="#8b6a13" d="M487,465L505,495L555,530L585,534L602,514Z" />
              <path fill="#8b2a13" d="M495,472L518,495L560,520L582,514Z" />
              <path fill="#fff" stroke="#66706f" stroke-width="3" d="M394,295C394,245 420,205 465,205C540,205 600,250 645,300C680,340 698,385 698,432C698,485 670,517 625,517C560,517 490,475 445,425C410,380 394,340 394,295Z" />
            </g>
          </svg>

          <div class="info"><span v-for="t in info" :key="t">{{ t }}</span></div>
          <div class="legend">
            <div class="bands"><i v-for="c in bands" :key="c" :style="{ background: c }"></i></div>
            <div class="vals"><span v-for="v in values" :key="v">{{ v }}</span></div>
          </div>
          <span class="unit">[MPa]</span>

          <svg class="triad" width="110" height="120" viewBox="110 60 330 360">
            <g fill="none" stroke="#9a9a9a" stroke-width="3"><path d="M130,252L224,222L308,258V376L210,405L130,369ZM130,252L210,288L308,258M210,288V405" /></g>
            <path d="M310,280L348,270L345,262L388,262L352,290L350,282L310,293Z" fill="#2f9a35" />
            <path d="M260,332L315,354" stroke="#c42a2a" stroke-width="14" stroke-linecap="round" /><path d="M322,344L358,378L306,374Z" fill="#c42a2a" />
            <path d="M211,256V165H203L218,110L234,165H227V256Z" fill="#0535c8" />
            <g font-family="Liberation Sans, sans-serif" font-size="36"><text x="207" y="96" fill="#1848e0">Z</text><text x="400" y="267" fill="#2f9a35">Y</text><text x="364" y="397" fill="#d03030">X</text></g>
          </svg>
        </div>
      </section>
    </main>
    <footer class="status"></footer>
  </div>
</template>

<style>
html, body { margin: 0; }
</style>

<style scoped>
.app { display: flex; flex-direction: column; height: 100vh; overflow: hidden; background: #f0f0f0; color: #1a1a1a; font: 11px/13px "Noto Sans", "Open Sans", sans-serif; }
button { border: 0; padding: 0; margin: 0; background: none; font: inherit; color: inherit; flex: none; }
a { color: inherit; text-decoration: none; }
i { font-style: normal; }
.caret { display: inline-block; flex: none; width: 0; height: 0; border: 3px solid transparent; border-top: 4px solid currentColor; border-bottom: 0; }

.head { flex: none; background: linear-gradient(90deg, #005f87, #057aa6); color: #fff; height: 54px; display: flex; flex-direction: column; }
.titlebar { display: flex; align-items: center; height: 26px; font-size: 11px; }
.logo { width: 34px; text-align: center; font: 800 19px/26px "Open Sans", sans-serif; flex: none; }
.tsep { width: 1px; height: 20px; margin: 0 3px; background: #00496b; flex: none; }
.ticon { width: 22px; height: 22px; display: grid; place-items: center; }
.tcaret { width: 16px; height: 22px; display: grid; place-items: center; }
.dim { color: #2f86ab; }
.tmenu { display: flex; align-items: center; gap: 4px; padding: 0 9px 0 2px; }
.burger { display: inline-block; height: 9px; width: 11px; border: solid currentColor; border-width: 1px 0; background: linear-gradient(currentColor, currentColor) center / 100% 1px no-repeat; margin-right: 3px; flex: none; }
.tmore { border-top: 1px solid #fff; padding-top: 2px; display: grid; }
.sp1 { flex: 19; }
.sp2 { flex: 13; }
.apptitle, .appmode { font-size: 12px; font-weight: 500; line-height: 20px; align-self: flex-start; white-space: nowrap; }
.appmode { margin-left: 9px; }
.search { position: relative; width: 160px; height: 20px; flex: none; }
.search input { box-sizing: border-box; width: 100%; height: 20px; border: 1px solid #777; background: #fff; padding: 0 22px 0 3px; font: inherit; }
.search input::placeholder { color: #777; }
.search svg { position: absolute; right: 1px; top: 1px; }
.brand { font: 800 14px/26px "Open Sans", sans-serif; margin: 3px 19px 0 11px; }
.wbtn { width: 24px; display: grid; place-items: center; }
.titlebar .wbtn:last-child { margin-right: 1px; }
.menutabs { display: flex; height: 28px; font-size: 12px; line-height: 29px; }
.menutabs a { text-align: center; white-space: nowrap; box-sizing: border-box; height: 26px; }
.menutabs a:first-child { margin-right: 4px; }
.menutabs a.on { color: #ffca4a; border-bottom: 2px solid #ffca4a; }
.help { margin-left: auto; margin-right: 7px; display: grid; place-items: center; }

.ribbon { flex: none; display: flex; height: 88px; border-bottom: 1px solid #b4b4b4; position: relative; }
.group { box-sizing: border-box; position: relative; display: flex; flex-direction: column; flex: none; }
.group::after { content: ""; position: absolute; right: 0; top: 5px; bottom: 4px; width: 1px; background: #bdbdbd; }
.gbody { display: flex; height: 73px; padding-top: 7px; box-sizing: border-box; }
.big { display: flex; flex-direction: column; align-items: center; white-space: nowrap; }
.big span { display: block; }
.big svg + span { margin-top: 4px; }
.off { color: #b5b5b5; }
.caret.in { margin-left: 3px; vertical-align: 2px; }
.caret.under { margin-top: 4px; }
.plus { width: 46px; margin: -2px 0 0 auto; padding-right: 2px; }
.small { display: grid; grid-auto-rows: 34px; margin-top: -4px; }
.small button { display: grid; place-items: center; width: 33px; }
.c2 { grid-template-columns: repeat(2, 33px); }
.c4 { grid-template-columns: repeat(4, 33px); }
.gname { color: #126590; text-align: center; line-height: 17px; position: relative; padding-right: 15px; }
.gname .caret { position: absolute; right: 8px; top: 4px; color: #111; }
.edge { position: absolute; right: 6px; bottom: 8px; }

.toolbar { flex: none; display: flex; align-items: center; height: 33px; border-bottom: 1px solid #a9a9a9; position: relative; }
.tbmenu { display: flex; align-items: center; width: 64px; margin-left: 15px; gap: 5px; }
.tbmenu .burger { width: 14px; height: 11px; margin-right: 4px; color: #444; }
.toolbar .bar { width: 1px; height: 26px; background: #bdbdbd; display: block; margin-left: 7px; }
.combo { position: relative; width: 143px; height: 22px; margin-left: 9px; }
.combo.first { width: 137px; margin-left: 12px; }
.combo select { appearance: none; box-sizing: border-box; width: 100%; height: 22px; border: 1px solid #707070; border-radius: 0; background: #fff; padding: 0 2px; font: inherit; color: #111; }
.combo .caret { position: absolute; right: 5px; top: 9px; border-width: 5px 4px 0; }
.tools { display: flex; align-items: center; gap: 1px; margin-left: 4px; }
.tool { width: 32px; height: 30px; display: grid; place-items: center; }
.pressed { background: #b0d8e2; }
.cell { width: 14px; height: 30px; display: grid; place-items: center; flex: none; }
.tools .bar { margin: 0; }
.tools input { appearance: none; width: 13px; height: 13px; border: 1px solid #555; border-radius: 3px; background: #fff; margin: 0 3px 0 2px; box-sizing: border-box; }

.main { flex: 1; min-height: 0; display: flex; }
.rail { width: 36px; flex: none; background: #bebebe; border-right: 1px solid #a9a9a9; display: flex; flex-direction: column; }
.rail button { height: 44px; display: grid; place-items: center; padding-left: 3px; }
.rail .first { height: 30px; }
.rail .on { background: #f0f0f0; border: 1px solid #a9a9a9; border-right: 0; margin: 0 -1px 0 3px; padding: 0; box-sizing: border-box; }

.panel { width: 542px; flex: none; display: flex; flex-direction: column; box-sizing: border-box; padding: 0 9px 5px 8px; border-right: 1px solid #a9a9a9; }
.ptitle { height: 24px; padding-bottom: 2px; display: flex; align-items: center; gap: 4px; }
.max { margin-left: auto; width: 12px; height: 11px; border: 1px solid #000; border-top-width: 2px; box-sizing: border-box; }
.tree { flex: 1; min-height: 0; display: flex; flex-direction: column; border: 1px solid #b9b9b9; }
.rows { flex: 1; min-height: 0; overflow: hidden; }
table { width: 100%; table-layout: fixed; border-collapse: separate; border-spacing: 0; }
.k1 { width: 200px; }
.k2 { width: 50px; }
th, td { height: 20px; box-sizing: border-box; padding: 0 3px; border: solid #e0e0e0; border-width: 0 1px 1px 0; white-space: nowrap; text-align: left; font-weight: 400; }
th { height: 19px; padding-left: 6px; background: #f0f0f0; border-color: #c4c4c4; }
td:first-child { padding: 0; }
td:nth-child(3) { padding: 0 0 0 4px; }
th:last-child, td:last-child { border-right: 0; }
tbody tr { background: #fafafa; }
tbody tr:nth-child(even) { background: #f4f4f4; }
.blue { color: #0000e8; }
.sel td { background: #b0d8e2; }
.sel td:first-child { background: linear-gradient(90deg, #fafafa 54px, #b0d8e2 54px); }
.node { display: flex; align-items: center; gap: 2px; padding-left: 1px; }
.lv1 { padding-left: 5px; }
.lv2 { padding-left: 24px; }
.ex { width: 9px; height: 9px; box-sizing: border-box; border: 1px solid #999; background: #fff; color: #000; font-size: 10px; line-height: 7px; text-align: center; margin-right: 3px; }
.scroll { height: 17px; flex: none; }
.scroll i { display: block; width: 57%; height: 2px; margin: 7px 0 0 17px; background: #858585; }

.work { flex: 1; min-width: 0; display: flex; flex-direction: column; }
.docs { display: flex; height: 24px; flex: none; border-bottom: 2px solid #005f87; }
.docs a { display: flex; align-items: center; gap: 5px; padding: 0 0 1px 5px; box-sizing: border-box; white-space: nowrap; flex: none; }
.docs .on { background: #005f87; color: #fff; }
.docs .x { margin: 1px 7px 0 auto; }
.view { flex: 1; min-height: 0; position: relative; background: #fff; border: solid #b4b4b4; border-width: 0 1px 1px 0; color: #1d3a60; font: 16px/18px "Liberation Sans", Arial, sans-serif; }
.model { position: absolute; inset: 0; width: 100%; height: 100%; }
.info { position: absolute; left: 15px; top: 7px; height: 131px; display: grid; align-items: center; white-space: nowrap; }
.legend { position: absolute; left: 15px; top: 206px; height: 561px; display: flex; gap: 12px; }
.bands { width: 26px; display: flex; flex-direction: column; }
.bands i { flex: 1; border-bottom: 1px solid #8f8f8f; }
.vals { display: flex; flex-direction: column; justify-content: space-between; margin: -8px 0 -10px; font-size: 17px; }
.unit { position: absolute; left: 14px; top: 805px; font-size: 17px; }
.triad { position: absolute; right: 33px; bottom: 76px; }
.status { flex: none; height: 24px; box-sizing: border-box; border-top: 1px solid #a9a9a9; border-bottom: 1px solid #12658c; }
</style>
